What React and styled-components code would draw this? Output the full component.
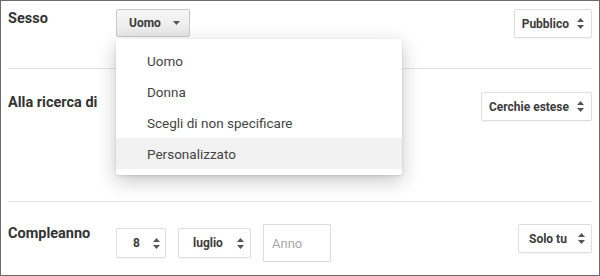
import React from "react";
import styled, { createGlobalStyle } from "styled-components";

const Global = createGlobalStyle`
  html, body { margin: 0; padding: 0; background: #fff; }
  * { box-sizing: border-box; }
  body { font-family: Roboto, "Liberation Sans", Arial, sans-serif; }
`;

const Card = styled.div`
  width: 600px;
  height: 276px;
  border: 1px solid #6b6b6b;
  padding: 0 7px;
  background: #fff;
  overflow: hidden;
`;

const Row = styled.div`
  display: grid;
  grid-template-columns: 108px 1fr auto;
  align-items: start;
  height: ${(p) => p.$h}px;
  padding-top: ${(p) => p.$pt}px;
  border-bottom: ${(p) => (p.$last ? "none" : "1px solid #e2e2e2")};
`;

const Label = styled.div`
  font-size: 14.5px;
  font-weight: 700;
  color: #333;
  line-height: 18px;
  margin-top: ${(p) => p.$mt}px;
`;

const Control = styled.div`
  position: relative;
  display: flex;
  align-items: center;
  gap: 12px;
`;

const DropButton = styled.div`
  display: flex;
  align-items: center;
  gap: 12px;
  height: 28px;
  padding: 0 9px 0 12px;
  border: 1px solid #c8c8c8;
  border-radius: 2px;
  background: linear-gradient(#f6f6f6, #e9e9e9);
  font-size: 12px;
  font-weight: 700;
  color: #3a3a3a;
`;

const Menu = styled.div`
  position: absolute;
  top: 30px;
  left: 0;
  width: 286px;
  padding: 6px 0;
  background: #fff;
  border-radius: 2px;
  box-shadow: 0 6px 20px rgba(0, 0, 0, 0.22), 0 1px 3px rgba(0, 0, 0, 0.12);
  z-index: 10;
`;

const MenuItem = styled.div`
  height: 31px;
  display: flex;
  align-items: center;
  padding-left: 31px;
  font-size: 13.5px;
  color: #444;
  background: ${(p) => (p.$active ? "#f2f2f2" : "transparent")};
`;

const Select = styled.div`
  display: flex;
  align-items: center;
  justify-content: space-between;
  gap: ${(p) => p.$gap ?? 8}px;
  width: ${(p) => (p.$w ? `${p.$w}px` : "auto")};
  height: ${(p) => p.$h ?? 29}px;
  padding: 0 ${(p) => p.$pr ?? 7}px 0 ${(p) => p.$pl ?? 7}px;
  border: 1px solid #dedede;
  border-radius: 2px;
  background: #fff;
  box-shadow: 0 1px 1px rgba(0, 0, 0, 0.04);
  font-size: 12px;
  font-weight: 700;
  color: #3c3c3c;
  white-space: nowrap;
`;

const Input = styled.div`
  width: 68px;
  height: 38px;
  border: 1px solid #dcdcdc;
  display: flex;
  align-items: center;
  padding-left: 8px;
  font-size: 13px;
  color: #a8a8a8;
`;

const Right = styled.div`
  display: flex;
  justify-content: flex-end;
`;

const Sort = () => (
  <svg width="7" height="11" viewBox="0 0 7 11">
    <path d="M3.5 0 L7 4 L0 4 Z" fill="#555" />
    <path d="M0 7 L7 7 L3.5 11 Z" fill="#555" />
  </svg>
);

const Caret = () => (
  <svg width="7" height="4" viewBox="0 0 7 4">
    <path d="M0 0 L7 0 L3.5 4 Z" fill="#555" />
  </svg>
);

export default function App() {
  return (
    <>
      <Global />
      <Card>
        <Row $h={68} $pt={8}>
          <Label $mt={1}>Sesso</Label>
          <Control>
            <DropButton>
              <span>Uomo</span>
              <Caret />
            </DropButton>
            <Menu>
              <MenuItem>Uomo</MenuItem>
              <MenuItem>Donna</MenuItem>
              <MenuItem>Scegli di non specificare</MenuItem>
              <MenuItem $active>Personalizzato</MenuItem>
            </Menu>
          </Control>
          <Right>
            <Select>
              <span>Pubblico</span>
              <Sort />
            </Select>
          </Right>
        </Row>
        <Row $h={133} $pt={23}>
          <Label $mt={2}>Alla ricerca di</Label>
          <div />
          <Right>
            <Select>
              <span>Cerchie estese</span>
              <Sort />
            </Select>
          </Right>
        </Row>
        <Row $h={74} $pt={22} $last>
          <Label $mt={1}>Compleanno</Label>
          <Control>
            <Select $w={50} $h={30} $pl={16} $pr={5}>
              <span>8</span>
              <Sort />
            </Select>
            <Select $w={73} $h={30} $pl={14} $pr={6}>
              <span>luglio</span>
              <Sort />
            </Select>
            <Input>Anno</Input>
          </Control>
          <Right>
            <Select $w={74} $pl={10} $pr={6}>
              <span>Solo tu</span>
              <Sort />
            </Select>
          </Right>
        </Row>
      </Card>
    </>
  );
}
